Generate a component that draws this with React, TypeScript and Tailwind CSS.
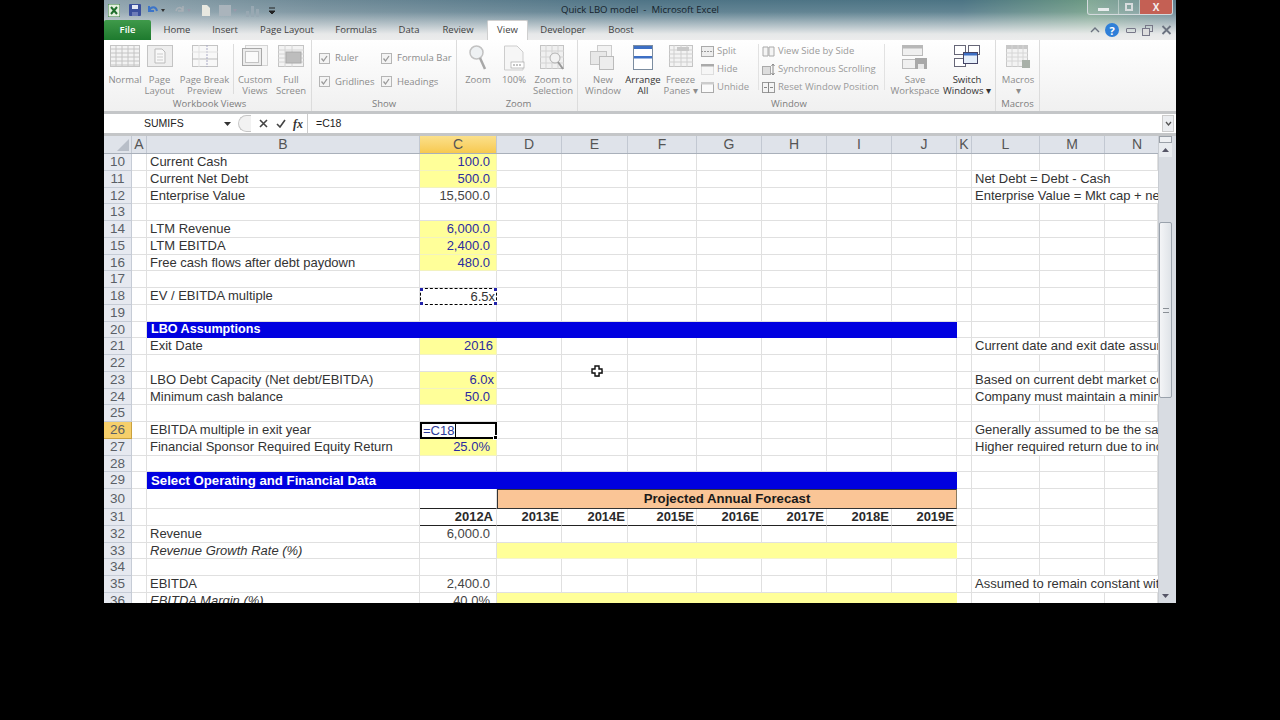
import { ReactNode } from 'react'

const ui = "font-['Open_Sans',sans-serif]"
const sheet = "font-['Liberation_Sans',Arial,sans-serif]"
const gridCols =
  'grid-cols-[28px_15px_273px_77px_65px_66px_69px_65px_65px_65px_65px_15px_68px_65px_53px]'

interface RowData {
  n: number
  label?: string
  italic?: boolean
  value?: string
  input?: boolean
  pad?: string
  band?: string
  bandSize?: string
  fill?: boolean
  forecast?: boolean
  years?: boolean
  note?: string
  ants?: boolean
  active?: boolean
}

const rows: RowData[] = [
  { n: 10, label: 'Current Cash', value: '100.0', input: true, pad: 'pr-[6px]' },
  { n: 11, label: 'Current Net Debt', value: '500.0', input: true, pad: 'pr-[6px]', note: 'Net Debt = Debt - Cash' },
  { n: 12, label: 'Enterprise Value', value: '15,500.0', pad: 'pr-[6px]', note: 'Enterprise Value = Mkt cap + net debt' },
  { n: 13 },
  { n: 14, label: 'LTM Revenue', value: '6,000.0', input: true, pad: 'pr-[6px]' },
  { n: 15, label: 'LTM EBITDA', value: '2,400.0', input: true, pad: 'pr-[6px]' },
  { n: 16, label: 'Free cash flows after debt paydown', value: '480.0', input: true, pad: 'pr-[6px]' },
  { n: 17 },
  { n: 18, label: 'EV / EBITDA multiple', value: '6.5x', ants: true },
  { n: 19 },
  { n: 20, band: 'LBO Assumptions', bandSize: 'text-[12.6px]' },
  { n: 21, label: 'Exit Date', value: '2016', input: true, note: 'Current date and exit date assumptions' },
  { n: 22 },
  { n: 23, label: 'LBO Debt Capacity (Net debt/EBITDA)', value: '6.0x', input: true, pad: 'pr-[2px]', note: 'Based on current debt market conditions' },
  { n: 24, label: 'Minimum cash balance', value: '50.0', input: true, pad: 'pr-[6px]', note: 'Company must maintain a minimum' },
  { n: 25 },
  { n: 26, label: 'EBITDA multiple in exit year', active: true, note: 'Generally assumed to be the same' },
  { n: 27, label: 'Financial Sponsor Required Equity Return', value: '25.0%', input: true, pad: 'pr-[6px]', note: 'Higher required return due to increased' },
  { n: 28 },
  { n: 29, band: 'Select Operating and Financial Data', bandSize: 'text-[13.2px]' },
  { n: 30, forecast: true },
  { n: 31, years: true, value: '2012A' },
  { n: 32, label: 'Revenue', value: '6,000.0', pad: 'pr-[6px]' },
  { n: 33, label: 'Revenue Growth Rate (%)', italic: true, fill: true },
  { n: 34 },
  { n: 35, label: 'EBITDA', value: '2,400.0', pad: 'pr-[6px]', note: 'Assumed to remain constant with' },
  { n: 36, label: 'EBITDA Margin (%)', italic: true, value: '40.0%', pad: 'pr-[6px]', fill: true },
]

const years = ['2013E', '2014E', '2015E', '2016E', '2017E', '2018E', '2019E']
const colHeads = [
  ['A', 'w-[15px]'],
  ['B', 'w-[273px]'],
  ['C', 'w-[77px]'],
  ['D', 'w-[65px]'],
  ['E', 'w-[66px]'],
  ['F', 'w-[69px]'],
  ['G', 'w-[65px]'],
  ['H', 'w-[65px]'],
  ['I', 'w-[65px]'],
  ['J', 'w-[65px]'],
  ['K', 'w-[15px]'],
  ['L', 'w-[68px]'],
  ['M', 'w-[65px]'],
  ['N', 'w-[65px]'],
]

function Blank({ className = '' }: { className?: string }) {
  return <div className={`border-r border-b border-[#e0e0e0] ${className}`} />
}

function SheetRow({ r }: { r: RowData }) {
  const h = r.forecast ? 'h-[20px]' : 'h-[16.75px]'
  const current = r.active
  return (
    <>
      <div
        className={`${h} flex items-center justify-center border-r border-b text-[13.5px] leading-none text-[#5a5f66] ${
          current ? 'border-[#c9a13e] bg-[#f6cf6b]' : 'border-[#c6ccd6] bg-[#e6e9f0]'
        }`}
      >
        {r.n}
      </div>
      <Blank className={h} />
      {r.band ? (
        <div className={`${h} col-span-9 flex items-center bg-[#0000e0] pl-[4px] ${r.bandSize} font-bold text-white`}>
          {r.band}
        </div>
      ) : (
        <>
          <div
            className={`${h} flex items-center whitespace-nowrap border-r border-b border-[#e0e0e0] pl-[3px] text-[13px] text-[#333] ${
              r.italic ? 'italic' : ''
            }`}
          >
            {r.label}
          </div>
          <ValueCell r={r} h={h} />
          {r.fill ? (
            <div className={`${h} col-span-7 border-b border-[#f4f4d0] bg-[#ffff99]`} />
          ) : r.forecast ? (
            <div className={`${h} col-span-7 flex items-center justify-center border-t border-r border-l border-b border-[#333] border-r-[#8a7a60] bg-[#fac596] text-[13.2px] font-bold text-[#1a1a1a]`}>
              Projected Annual Forecast
            </div>
          ) : r.years ? (
            years.map((y) => (
              <div key={y} className={`${h} flex items-center justify-end border-r border-b border-r-[#e0e0e0] border-b-[#222] pr-[2px] text-[13px] font-bold text-[#2a2a2a]`}>
                {y}
              </div>
            ))
          ) : (
            years.map((y) => <Blank key={y} className={h} />)
          )}
        </>
      )}
      <Blank className={h} />
      {r.note ? (
        <div className={`${h} col-span-3 flex items-center overflow-hidden whitespace-nowrap border-b border-[#e0e0e0] pl-[3px] text-[13px] text-[#333]`}>
          {r.note}
        </div>
      ) : (
        <>
          <Blank className={h} />
          <Blank className={h} />
          <Blank className={h} />
        </>
      )}
    </>
  )
}

function ValueCell({ r, h }: { r: RowData; h: string }) {
  if (r.active) {
    return (
      <div className={`${h} relative flex items-center border-2 border-black bg-white pl-[1px] text-[13px] text-[#2b3a9a]`}>
        =C18<span className="ml-[1px] h-[13px] w-px bg-black" />
        <span className="absolute -right-[3px] -bottom-[3px] size-[5px] border border-white bg-black" />
      </div>
    )
  }
  if (r.ants) {
    return (
      <div className={`${h} relative flex items-center justify-end border border-dashed border-black pr-[1px] text-[13px] text-[#333]`}>
        {r.value}
        <span className="absolute -top-px -left-px size-[3px] bg-[#2222aa]" />
        <span className="absolute -top-px -right-px size-[3px] bg-[#2222aa]" />
        <span className="absolute -bottom-px -left-px size-[3px] bg-[#2222aa]" />
        <span className="absolute -right-px -bottom-px size-[3px] bg-[#2222aa]" />
      </div>
    )
  }
  if (r.years) {
    return (
      <div className={`${h} flex items-center justify-end border-r border-b border-r-[#e0e0e0] border-b-[#222] pr-[3px] text-[13px] font-bold text-[#2a2a2a]`}>
        {r.value}
      </div>
    )
  }
  return (
    <div
      className={`${h} flex items-center justify-end border-r border-b ${r.pad ?? 'pr-[3px]'} text-[13px] ${
        r.input ? 'border-[#f2f2c0] bg-[#ffff99] text-[#2b2ba0]' : 'border-[#e0e0e0] text-[#444]'
      } ${r.forecast ? 'border-b-[#222]' : ''}`}
    >
      {r.value}
    </div>
  )
}

function Big({ icon, lines, dark, className = 'w-[36px]' }: { icon: ReactNode; lines: string[]; dark?: boolean; className?: string }) {
  return (
    <div className={`flex shrink-0 flex-col items-center ${className}`}>
      <div className="flex h-[30px] items-start justify-center pt-[1px]">{icon}</div>
      <div className={`whitespace-nowrap text-center text-[9.5px] leading-[11px] ${dark ? 'text-[#333]' : 'text-[#8c8c8c]'}`}>
        {lines.map((l) => (
          <div key={l}>{l}</div>
        ))}
      </div>
    </div>
  )
}

function Group({ label, className, children }: { label: string; className: string; children: ReactNode }) {
  return (
    <div className={`flex h-full shrink-0 flex-col border-r border-[#dcdcdc] ${className}`}>
      <div className="flex flex-1 pt-[4px]">{children}</div>
      <div className="h-[15px] text-center text-[9.5px] leading-[16px] text-[#7d7d7d]">{label}</div>
    </div>
  )
}

function Check({ label }: { label: string }) {
  return (
    <div className="flex items-center gap-[5px] whitespace-nowrap text-[9.5px] text-[#8c8c8c]">
      <svg width="11" height="11" viewBox="0 0 11 11">
        <rect x="0.5" y="0.5" width="10" height="10" fill="#f4f4f4" stroke="#b5b5b5" />
        <path d="M2.5 5.5 L4.5 8 L8 3" fill="none" stroke="#9a9a9a" strokeWidth="1.3" />
      </svg>
      {label}
    </div>
  )
}

function Small({ icon, label }: { icon: ReactNode; label: string }) {
  return (
    <div className="flex h-[18px] items-center gap-[3px] whitespace-nowrap text-[9.5px] text-[#9a9a9a]">
      {icon}
      {label}
    </div>
  )
}

const G = '#c4c4c4'

function GridIcon({ w = 30, h = 22 }: { w?: number; h?: number }) {
  const hs = [4, 8, 12, 16, 20].filter((y) => y < h)
  const vs = [6, 12, 18, 24].filter((x) => x < w)
  return (
    <svg width={w} height={h} viewBox={`0 0 ${w} ${h}`}>
      <rect x="0.5" y="0.5" width={w - 1} height={h - 1} fill="#f3f3f3" stroke={G} />
      {hs.map((y) => (
        <path key={y} d={`M0 ${y}H${w}`} stroke={G} />
      ))}
      {vs.map((x) => (
        <path key={x} d={`M${x} 0V${h}`} stroke={G} />
      ))}
    </svg>
  )
}

function PageIcon() {
  return (
    <svg width="26" height="22" viewBox="0 0 26 22">
      <rect x="0.5" y="0.5" width="25" height="21" fill="#eeeeee" stroke={G} />
      <path d="M8 4H15L18 7V18H8Z" fill="#f8f8f8" stroke="#bbb" />
      <path d="M10 9H16M10 12H16M10 15H16" stroke="#ccc" />
    </svg>
  )
}

function BreakIcon() {
  return (
    <svg width="26" height="22" viewBox="0 0 26 22">
      <rect x="0.5" y="0.5" width="25" height="21" fill="#f8f8f8" stroke={G} />
      <path d="M0 14H26" stroke="#bbb" />
      <path d="M15 0V22" stroke="#a9a9c4" strokeDasharray="2 1" />
      <path d="M7 0V22M0 7H26" stroke="#e2e2e2" />
    </svg>
  )
}

function WindowsIcon() {
  return (
    <svg width="26" height="22" viewBox="0 0 26 22">
      <rect x="3.5" y="0.5" width="22" height="20" fill="#f5f5f5" stroke="#d4d4d4" />
      <rect x="0.5" y="3.5" width="19" height="17" fill="#ececec" stroke="#a8a8a8" />
      <rect x="3.5" y="6.5" width="13" height="11" fill="#fafafa" stroke="#c4c4c4" />
    </svg>
  )
}

function FullIcon() {
  return (
    <svg width="26" height="22" viewBox="0 0 26 22">
      <rect x="0.5" y="0.5" width="25" height="21" fill="#f3f3f3" stroke={G} />
      <path d="M0 5H26M0 9H26M0 13H26M0 17H26M7 0V22M14 0V22" stroke="#d4d4d4" />
      <rect x="8" y="7" width="15" height="11" fill="#bdbdbd" stroke="#aaa" />
    </svg>
  )
}

function Magnifier() {
  return (
    <svg width="18" height="26" viewBox="0 0 18 26">
      <circle cx="7.5" cy="7.5" r="6.5" fill="#eef1f3" stroke="#c2c2c2" strokeWidth="1.5" />
      <path d="M11 13L16 24" stroke="#a8a8a8" strokeWidth="2.5" />
    </svg>
  )
}

function HundredIcon() {
  return (
    <svg width="22" height="26" viewBox="0 0 22 26">
      <path d="M1.5 1H14L20 7V25H1.5Z" fill="#f6f6f6" stroke="#cdcdcd" />
      <rect x="8" y="17" width="13" height="6" fill="#fff" stroke="#999" strokeWidth="0.6" />
      <path d="M10 20H19" stroke="#888" strokeDasharray="2 1" />
    </svg>
  )
}

function SelectionIcon() {
  return (
    <svg width="26" height="26" viewBox="0 0 26 26">
      <rect x="0.5" y="0.5" width="23" height="23" fill="#f0f0f0" stroke={G} />
      <path d="M0 6H24M0 12H24M0 18H24M6 0V24M12 0V24M18 0V24" stroke="#d4d4d4" />
      <circle cx="15" cy="13" r="5" fill="#f2f2f2" stroke="#b0b0b0" />
      <path d="M18 17L23 24" stroke="#999" strokeWidth="2" />
    </svg>
  )
}

function NewWindowIcon() {
  return (
    <svg width="26" height="26" viewBox="0 0 26 26">
      <rect x="7.5" y="0.5" width="14" height="15" fill="#f2f2f2" stroke="#ccc" />
      <rect x="0.5" y="6.5" width="16" height="13" fill="#e8e8e8" stroke="#c4c4c4" />
      <rect x="9.5" y="11.5" width="14" height="13" fill="#ededed" stroke="#bbb" />
    </svg>
  )
}

function ArrangeIcon() {
  return (
    <svg width="20" height="25" viewBox="0 0 20 25">
      <rect x="0.5" y="0.5" width="19" height="24" fill="#fff" stroke="#7c8da0" />
      <rect x="1" y="1" width="18" height="3" fill="#3d6fc4" />
      <rect x="1" y="11" width="18" height="2.5" fill="#3d6fc4" />
    </svg>
  )
}

function FreezeIcon() {
  return (
    <svg width="24" height="22" viewBox="0 0 24 22">
      <rect x="0.5" y="0.5" width="23" height="21" fill="#f3f3f3" stroke={G} />
      <path d="M0 5H24M0 9H24M0 13H24M0 17H24M5 0V22M12 0V22M18 0V22" stroke="#cfcfcf" />
      <rect x="8" y="2" width="12" height="4" fill="#c9c9c9" />
    </svg>
  )
}

function SaveIcon() {
  return (
    <svg width="26" height="25" viewBox="0 0 26 25">
      <rect x="0.5" y="0.5" width="20" height="10" fill="#f0f0f0" stroke="#bbb" />
      <rect x="0.5" y="0.5" width="20" height="3" fill="#b8b8b8" />
      <rect x="0.5" y="14.5" width="16" height="9" fill="#f0f0f0" stroke="#bbb" />
      <rect x="13" y="13" width="12" height="11" fill="#a8a8a8" />
      <rect x="16" y="19" width="6" height="5" fill="#e8e8e8" />
    </svg>
  )
}

function SwitchIcon() {
  return (
    <svg width="26" height="22" viewBox="0 0 26 22">
      <rect x="0.5" y="0.5" width="11" height="9" fill="#fff" stroke="#667" />
      <rect x="14.5" y="0.5" width="11" height="9" fill="#fff" stroke="#667" />
      <rect x="0.5" y="13.5" width="11" height="8" fill="#fff" stroke="#667" />
      <rect x="9.5" y="7.5" width="14" height="11" fill="#e6effa" stroke="#446" />
      <rect x="10" y="8" width="13" height="2.5" fill="#3d6fc4" />
    </svg>
  )
}

function MacrosIcon() {
  return (
    <svg width="24" height="24" viewBox="0 0 24 24">
      <rect x="0.5" y="0.5" width="21" height="21" fill="#f3f3f3" stroke="#c8c8c8" />
      <rect x="1" y="1" width="20" height="3" fill="#c8c8c8" />
      <path d="M0 8H22M0 12H22M0 16H22M6 0V22M12 0V22M17 0V22" stroke="#d6d6d6" />
      <rect x="16" y="15" width="8" height="8" fill="#a9b1a9" />
    </svg>
  )
}

function Tiny({ children }: { children: ReactNode }) {
  return (
    <svg width="13" height="11" viewBox="0 0 13 11">
      {children}
    </svg>
  )
}

function Ribbon() {
  return (
    <div className={`flex h-[71px] bg-gradient-to-b from-white to-[#f0f0f0] ${ui}`}>
      <Group label="Workbook Views" className="w-[208px] pl-[4px]">
        <Big icon={<GridIcon />} lines={['Normal']} className="w-[34px]" />
        <Big icon={<PageIcon />} lines={['Page', 'Layout']} className="w-[35px]" />
        <Big icon={<BreakIcon />} lines={['Page Break', 'Preview']} className="w-[55px]" />
        <div className="mx-[1px] h-[50px] w-px bg-[#dcdcdc]" />
        <Big icon={<WindowsIcon />} lines={['Custom', 'Views']} className="ml-[2px] w-[36px]" />
        <Big icon={<FullIcon />} lines={['Full', 'Screen']} className="w-[36px]" />
      </Group>
      <Group label="Show" className="w-[145px]">
        <div className="grid h-[38px] translate-y-[7px] grid-cols-[62px_auto] content-between pl-[7px]">
          <Check label="Ruler" />
          <Check label="Formula Bar" />
          <Check label="Gridlines" />
          <Check label="Headings" />
        </div>
      </Group>
      <Group label="Zoom" className="w-[121px] pl-[3px]">
        <Big icon={<Magnifier />} lines={['Zoom']} className="w-[36px]" />
        <Big icon={<HundredIcon />} lines={['100%']} className="w-[36px]" />
        <Big icon={<SelectionIcon />} lines={['Zoom to', 'Selection']} className="w-[42px]" />
      </Group>
      <Group label="Window" className="w-[418px] pl-[5px]">
        <Big icon={<NewWindowIcon />} lines={['New', 'Window']} className="w-[40px]" />
        <Big icon={<ArrangeIcon />} lines={['Arrange', 'All']} dark className="w-[40px]" />
        <Big icon={<FreezeIcon />} lines={['Freeze', 'Panes ▾']} className="w-[35px]" />
        <div className="-mt-[2px] ml-[3px] w-[55px]">
          <Small label="Split" icon={<Tiny><rect x="0.5" y="0.5" width="12" height="10" fill="#eee" stroke="#aaa" /><path d="M0 5.5H13" stroke="#999" strokeDasharray="2 1" /></Tiny>} />
          <Small label="Hide" icon={<Tiny><rect x="0.5" y="0.5" width="12" height="10" fill="#f6f6f6" stroke="#ddd" /><rect x="0" y="0" width="13" height="2.5" fill="#aaa" /></Tiny>} />
          <Small label="Unhide" icon={<Tiny><rect x="0.5" y="0.5" width="12" height="10" fill="#fafafa" stroke="#aaa" /><rect x="0" y="0" width="13" height="2.5" fill="#ccc" /></Tiny>} />
        </div>
        <div className="mr-[3px] ml-[2px] h-[46px] w-px bg-[#e2e2e2]" />
        <div className="-mt-[2px] w-[118px]">
          <Small label="View Side by Side" icon={<Tiny><path d="M1 1H6V10H1ZM7 1H12V10H7Z" fill="#f4f4f4" stroke="#aaa" /></Tiny>} />
          <Small label="Synchronous Scrolling" icon={<Tiny><rect x="0.5" y="2.5" width="8" height="8" fill="#ddd" stroke="#aaa" /><path d="M11 0V11M9.5 2L11 0L12.5 2M9.5 9L11 11L12.5 9" fill="none" stroke="#888" /></Tiny>} />
          <Small label="Reset Window Position" icon={<Tiny><rect x="0.5" y="0.5" width="12" height="10" fill="#f4f4f4" stroke="#999" /><path d="M6.5 0V11M2 5.5H5M8 5.5H11" stroke="#888" /></Tiny>} />
        </div>
        <div className="mx-[4px] h-[46px] w-px bg-[#e2e2e2]" />
        <Big icon={<SaveIcon />} lines={['Save', 'Workspace']} className="ml-[1px] w-[50px]" />
        <Big icon={<SwitchIcon />} lines={['Switch', 'Windows ▾']} dark className="ml-[2px] w-[50px]" />
      </Group>
      <Group label="Macros" className="w-[44px]">
        <Big icon={<MacrosIcon />} lines={['Macros', '▾']} className="w-[44px]" />
      </Group>
    </div>
  )
}

function TitleBar() {
  return (
    <div className="h-[40px] bg-[linear-gradient(180deg,rgba(255,255,255,0)_0%,rgba(255,255,255,0.12)_30%,rgba(238,238,238,0.95)_85%,#ececec_100%),linear-gradient(90deg,#8fa3ad_0%,#6f8a97_20%,#4f7486_50%,#4c7484_80%,#6d9a84_92%,#5f7d8c_100%)]">
      <div className="grid h-[20px] grid-cols-[1fr_auto_1fr]">
        <div className="flex items-center pl-[4px]">
          <svg width="12" height="13" viewBox="0 0 12 13">
            <rect width="12" height="13" fill="#e6f0e0" stroke="#2f7a3a" />
            <path d="M3 3L9 10M9 3L3 10" stroke="#1f6e2c" strokeWidth="2" />
          </svg>
          <svg className="ml-[9px]" width="12" height="12" viewBox="0 0 12 12">
            <rect width="12" height="12" rx="1" fill="#3a4f9c" />
            <rect x="3" y="1" width="6" height="4" fill="#e4e8f4" />
            <rect x="3" y="8" width="6" height="4" fill="#6d7cb8" />
          </svg>
          <svg className="ml-[6px]" width="18" height="12" viewBox="0 0 18 12">
            <path d="M2 2V7H7M2 7C4 2 9 2 10 7" fill="none" stroke="#3c74c8" strokeWidth="2" />
            <path d="M14 5H18L16 8Z" fill="#333" />
          </svg>
          <svg className="ml-[9px]" width="18" height="12" viewBox="0 0 18 12">
            <path d="M9 2V7H4M9 7C7 2 3 3 2 7" fill="none" stroke="#a9b0b6" strokeWidth="1.5" />
            <path d="M13 5H17L15 8Z" fill="#99a" />
          </svg>
          <svg className="ml-[9px]" width="10" height="13" viewBox="0 0 10 13">
            <path d="M1 1H6L9 4V12H1Z" fill="#e8e8e0" />
          </svg>
          <svg className="ml-[7px]" width="20" height="13" viewBox="0 0 20 13">
            <rect x="1" y="1" width="12" height="11" fill="#aab4bc" />
            <path d="M15 5H19L17 8Z" fill="#99a" />
          </svg>
          <svg className="ml-[6px]" width="18" height="13" viewBox="0 0 18 13">
            <path d="M2 13V7H5V13ZM7 13V2H10V13ZM12 13V5H15V13Z" fill="#98a8b2" />
          </svg>
          <svg className="ml-[6px]" width="8" height="11" viewBox="0 0 8 11">
            <path d="M1 3H7M1 6H7L4 9Z" stroke="#222" fill="#222" />
          </svg>
        </div>
        <div className={`flex items-center text-[9.6px] text-[#16232c] ${ui}`}>Quick LBO model&nbsp;&nbsp;-&nbsp;&nbsp;Microsoft Excel</div>
        <div className="flex justify-end pr-[3px]">
          <div className="flex h-[15px] w-[86px] overflow-hidden rounded-b-[3px] border border-t-0 border-[#d4dade]">
            <div className="flex w-[30px] items-end justify-center bg-white/15 pb-[3px]">
              <div className="h-[3px] w-[11px] bg-[#e8ecee]" />
            </div>
            <div className="flex w-[22px] items-center justify-center border-x border-white/40 bg-white/15">
              <div className="size-[8px] border-2 border-[#d8dcde]" />
            </div>
            <div className={`flex flex-1 items-center justify-center bg-[#c46054] text-[10px] font-bold leading-none text-[#f4eeee] ${ui}`}>X</div>
          </div>
        </div>
      </div>
      <div className={`flex h-[20px] items-center text-[9.5px] text-[#3f3f3f] ${ui}`}>
        <div className="flex h-[20px] w-[47px] items-center justify-center rounded-t-[2px] bg-gradient-to-b from-[#3f9a4a] to-[#1d7a2e] font-semibold text-white">
          File
        </div>
        <div className="w-[52px] text-center">Home</div>
        <div className="ml-[4px] w-[36px] text-center">Insert</div>
        <div className="w-[88px] text-center">Page Layout</div>
        <div className="w-[50px] text-center">Formulas</div>
        <div className="w-[56px] text-center">Data</div>
        <div className="w-[42px] text-center">Review</div>
        <div className="ml-[8px] flex h-[20px] w-[41px] items-center justify-center rounded-t-[2px] border border-b-0 border-[#cfcfcf] bg-white">
          View
        </div>
        <div className="w-[70px] text-center">Developer</div>
        <div className="ml-[3px] w-[40px] text-center">Boost</div>
        <div className="ml-auto flex items-center gap-[5px] pr-[4px]">
          <svg width="10" height="8" viewBox="0 0 10 8">
            <path d="M1 6L5 2L9 6" fill="none" stroke="#6b7280" strokeWidth="1.4" />
          </svg>
          <div className="flex size-[14px] items-center justify-center rounded-full bg-[#2f7fd8] text-[11px] font-bold leading-none text-white">?</div>
          <div className="ml-[2px] h-[5px] w-[10px] rounded-[1px] border border-[#778]" />
          <svg className="ml-[1px]" width="11" height="11" viewBox="0 0 11 11">
            <rect x="3.5" y="0.5" width="7" height="6" fill="none" stroke="#778" />
            <rect x="0.5" y="3.5" width="7" height="7" fill="#ddd" stroke="#778" />
          </svg>
          <svg className="ml-[3px]" width="11" height="10" viewBox="0 0 11 10">
            <path d="M1.5 1L9.5 9M9.5 1L1.5 9" stroke="#6b7280" strokeWidth="1.8" />
          </svg>
        </div>
      </div>
    </div>
  )
}

function FormulaBar() {
  return (
    <div className="border-y-[3px] border-y-[#c4c6c8] bg-white">
      <div className={`flex h-[19px] items-center text-[10.5px] text-[#222] ${sheet}`}>
        <div className="flex w-[131px] items-center justify-between pl-[40px] pr-[4px]">
          SUMIFS
          <svg width="7" height="4" viewBox="0 0 7 4">
            <path d="M0 0H7L3.5 4Z" fill="#333" />
          </svg>
        </div>
        <div className="flex h-full w-[73px] items-center border-r border-[#ccc] pl-[3px]">
          <div className="h-[17px] w-[13px] rounded-l-full border border-r-0 border-[#c6c6c6] bg-[#f2f2f2]" />
          <svg className="ml-[8px]" width="9" height="9" viewBox="0 0 9 9">
            <path d="M1 1L8 8M8 1L1 8" stroke="#444" strokeWidth="1.6" />
          </svg>
          <svg className="ml-[8px]" width="10" height="9" viewBox="0 0 10 9">
            <path d="M1 5L4 8L9 1" fill="none" stroke="#444" strokeWidth="1.6" />
          </svg>
          <span className="ml-[7px] font-['Liberation_Serif',serif] text-[12px] font-bold italic leading-none text-[#333]">fx</span>
        </div>
        <div className="flex-1 pl-[8px]">=C18</div>
        <div className="mr-[2px] flex h-[17px] w-[12px] items-center justify-center border border-[#ccc] bg-[#eceef1]">
          <svg width="7" height="5" viewBox="0 0 7 5">
            <path d="M1 1L3.5 4L6 1" fill="none" stroke="#555" strokeWidth="1.3" />
          </svg>
        </div>
      </div>
    </div>
  )
}

function Scrollbar() {
  return (
    <div className="flex w-[18px] shrink-0 flex-col border-l border-[#c8ccd2] bg-[#d8dce2] pr-[4px]">
      <div className="h-[7px] border border-[#9aa0a8] bg-[#eef0f3]" />
      <div className="flex h-[14px] items-center justify-center bg-[#e8ebef]">
        <svg width="7" height="4" viewBox="0 0 7 4">
          <path d="M0 4H7L3.5 0Z" fill="#556" />
        </svg>
      </div>
      <div className="h-[65px]" />
      <div className="flex h-[176px] items-center justify-center rounded-[2px] border border-[#9aa2ac] bg-gradient-to-r from-[#f4f5f7] to-[#dfe3e8]">
        <div className="h-[5px] w-[6px] border-y border-[#8a8f96]" />
      </div>
      <div className="flex-1" />
      <div className="flex h-[14px] items-center justify-center">
        <svg width="7" height="4" viewBox="0 0 7 4">
          <path d="M0 0H7L3.5 4Z" fill="#556" />
        </svg>
      </div>
    </div>
  )
}

export default function App() {
  return (
    <div className="flex h-[720px] w-[1280px] justify-center overflow-hidden bg-black">
      <div className="relative flex h-[603px] w-[1072px] flex-col overflow-hidden bg-white">
        <TitleBar />
        <Ribbon />
        <FormulaBar />
        <div className={`flex min-h-0 flex-1 ${sheet}`}>
          <div className="min-w-0 flex-1 overflow-hidden">
            <div className="flex h-[18px] border-b border-[#a9b0ba] bg-[#dfe3ea] text-[14px] leading-[17px] text-[#555]">
              <div className="flex w-[28px] shrink-0 items-end justify-end border-r border-[#c2c8d2] p-[2px]">
                <svg width="12" height="12" viewBox="0 0 12 12">
                  <path d="M12 0V12H0Z" fill="#b8bec8" />
                </svg>
              </div>
              {colHeads.map(([c, w]) => (
                <div
                  key={c}
                  className={`${w} shrink-0 border-r border-[#c2c8d2] text-center ${
                    c === 'C' ? 'bg-gradient-to-b from-[#fbe08a] to-[#f7c94e]' : ''
                  }`}
                >
                  {c}
                </div>
              ))}
            </div>
            <div className={`grid ${gridCols}`}>
              {rows.map((r) => (
                <SheetRow key={r.n} r={r} />
              ))}
            </div>
          </div>
          <Scrollbar />
        </div>
        {/* excel's fat-cross pointer */}
        <svg className="absolute top-[364px] left-[486px]" width="15" height="15" viewBox="0 0 15 15">
          <path d="M5 2H9V5H12V9H9V12H5V9H2V5H5Z" fill="#777" opacity="0.5" transform="translate(1 1)" />
          <path d="M5 2H9V5H12V9H9V12H5V9H2V5H5Z" fill="#fff" stroke="#111" strokeWidth="1.4" />
        </svg>
      </div>
    </div>
  )
}
